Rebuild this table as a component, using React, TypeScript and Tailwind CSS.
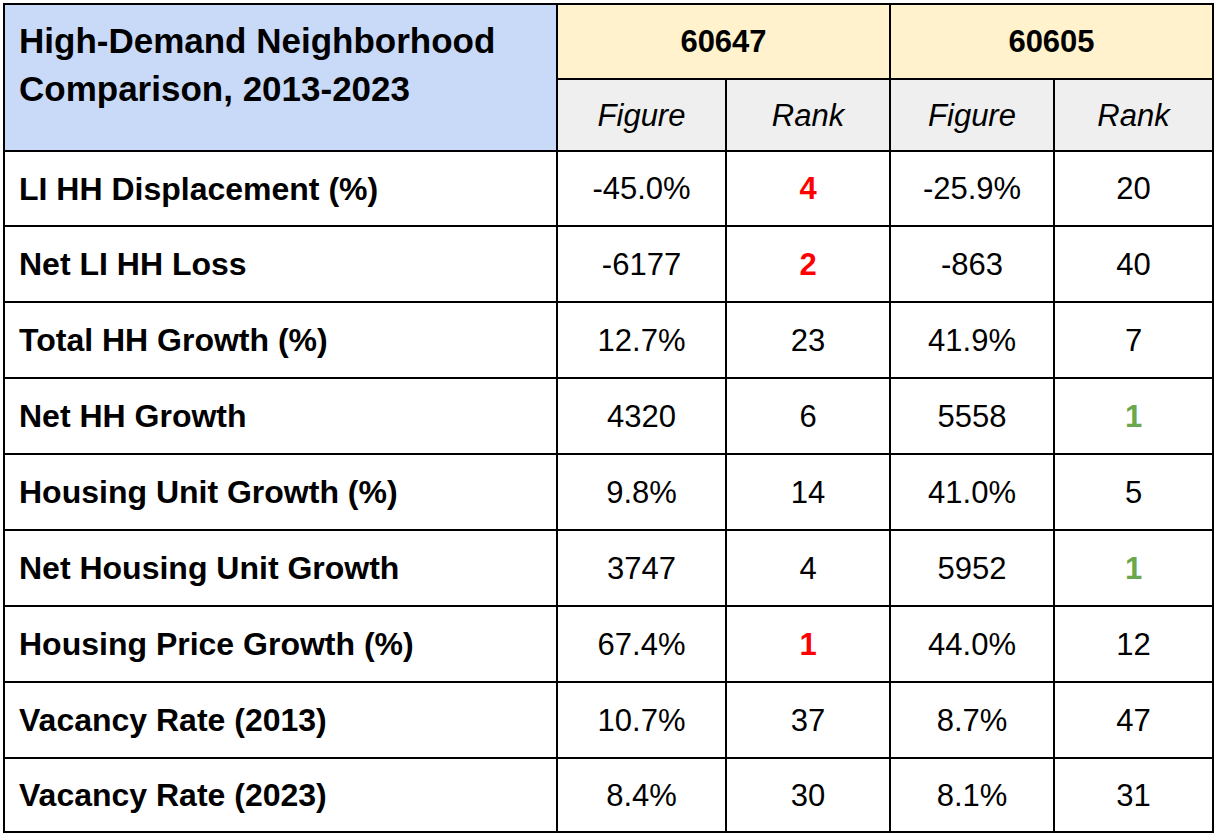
type Row = {
  label: string
  a: string
  aRank: string
  b: string
  bRank: string
  aColor?: 'red' | 'green'
  bColor?: 'red' | 'green'
}

const rows: Row[] = [
  { label: 'LI HH Displacement (%)', a: '-45.0%', aRank: '4', aColor: 'red', b: '-25.9%', bRank: '20' },
  { label: 'Net LI HH Loss', a: '-6177', aRank: '2', aColor: 'red', b: '-863', bRank: '40' },
  { label: 'Total HH Growth (%)', a: '12.7%', aRank: '23', b: '41.9%', bRank: '7' },
  { label: 'Net HH Growth', a: '4320', aRank: '6', b: '5558', bRank: '1', bColor: 'green' },
  { label: 'Housing Unit Growth (%)', a: '9.8%', aRank: '14', b: '41.0%', bRank: '5' },
  { label: 'Net Housing Unit Growth', a: '3747', aRank: '4', b: '5952', bRank: '1', bColor: 'green' },
  { label: 'Housing Price Growth (%)', a: '67.4%', aRank: '1', aColor: 'red', b: '44.0%', bRank: '12' },
  { label: 'Vacancy Rate (2013)', a: '10.7%', aRank: '37', b: '8.7%', bRank: '47' },
  { label: 'Vacancy Rate (2023)', a: '8.4%', aRank: '30', b: '8.1%', bRank: '31' },
]

function RankCell({ value, color }: { value: string; color?: 'red' | 'green' }) {
  const cls =
    color === 'red'
      ? 'font-bold text-[#ff0000]'
      : color === 'green'
        ? 'font-bold text-[#6aa84f]'
        : ''
  return <td className={`border-2 border-black text-center align-middle ${cls}`}>{value}</td>
}

function rowHeight(i: number) {
  if (i === 0) return 'h-[75px]'
  if (i === rows.length - 1) return 'h-[74px]'
  return 'h-[76px]'
}

export default function App() {
  return (
    <div className="min-h-screen bg-white pl-[3px] pt-[3px] font-['Liberation_Sans',Arial,sans-serif] text-black">
      <table className="table-fixed border-collapse border-2 border-black text-[31px] leading-none">
        <colgroup>
          <col className="w-[553px]" />
          <col className="w-[169px]" />
          <col className="w-[164px]" />
          <col className="w-[164px]" />
          <col className="w-[159px]" />
        </colgroup>
        <thead>
          <tr className="h-[75px]">
            <th
              rowSpan={2}
              className="border-2 border-black bg-[#c9daf8] pl-[14px] pt-[12px] text-left align-top text-[35px] font-bold leading-[48px]"
            >
              High-Demand Neighborhood
              <br />
              Comparison, 2013-2023
            </th>
            <th colSpan={2} className="border-2 border-black bg-[#fff2cc] text-center align-middle font-bold">
              60647
            </th>
            <th colSpan={2} className="border-2 border-black bg-[#fff2cc] text-center align-middle font-bold">
              60605
            </th>
          </tr>
          <tr className="h-[72px]">
            <th className="border-2 border-black bg-[#efefef] text-center align-middle font-normal italic">Figure</th>
            <th className="border-2 border-black bg-[#efefef] text-center align-middle font-normal italic">Rank</th>
            <th className="border-2 border-black bg-[#efefef] text-center align-middle font-normal italic">Figure</th>
            <th className="border-2 border-black bg-[#efefef] text-center align-middle font-normal italic">Rank</th>
          </tr>
        </thead>
        <tbody>
          {rows.map((r, i) => (
            <tr key={r.label} className={rowHeight(i)}>
              <td className="border-2 border-black pl-[14px] text-left align-middle text-[32px] font-bold">{r.label}</td>
              <td className="border-2 border-black text-center align-middle">{r.a}</td>
              <RankCell value={r.aRank} color={r.aColor} />
              <td className="border-2 border-black text-center align-middle">{r.b}</td>
              <RankCell value={r.bRank} color={r.bColor} />
            </tr>
          ))}
        </tbody>
      </table>
    </div>
  )
}
